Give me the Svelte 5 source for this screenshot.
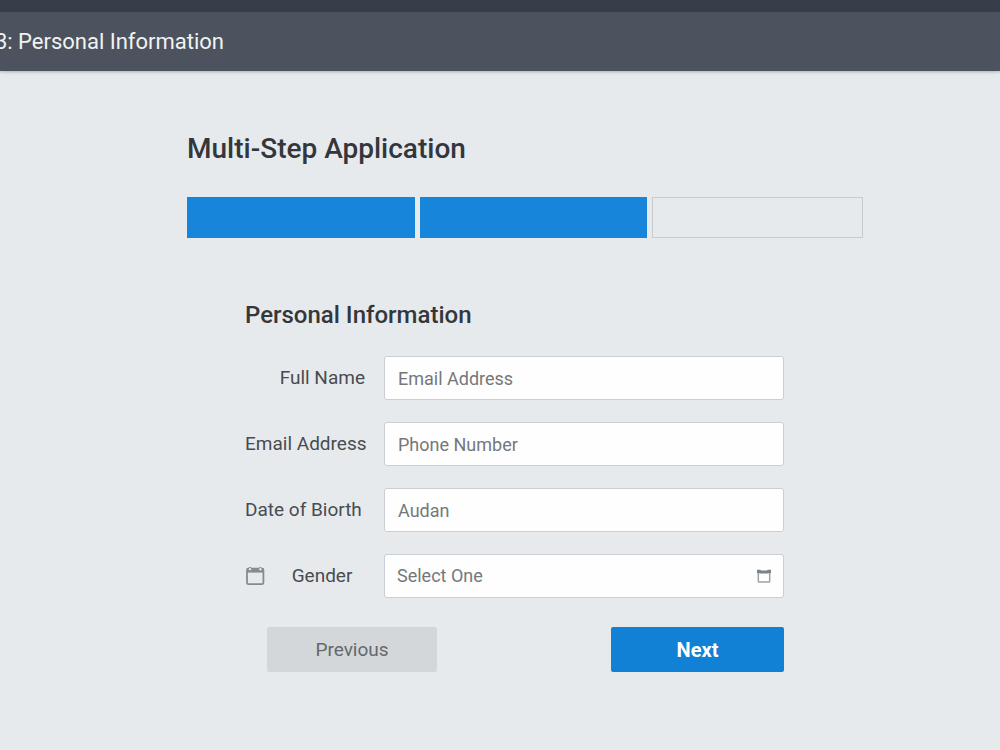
<script lang="ts">
  const steps = [true, true, false];
  const fields = [
    { id: 'full-name', label: 'Full Name', placeholder: 'Email Address', align: 'inset' },
    { id: 'email', label: 'Email Address', placeholder: 'Phone Number', align: 'start' },
    { id: 'birth', label: 'Date of Biorth', placeholder: 'Audan', align: 'start' },
  ];
</script>

<header>
  <div class="strip"></div>
  <div class="bar"><p class="crumb">3: Personal Information</p></div>
</header>

<main>
  <h1>Multi-Step Application</h1>
  <div class="steps">
    {#each steps as done}
      <div class="step" class:done></div>
    {/each}
  </div>

  <form onsubmit={(e) => e.preventDefault()}>
    <h2>Personal Information</h2>
    <div class="fields">
      {#each fields as f}
        <div class="row">
          <div class="caption {f.align}"><label for={f.id}>{f.label}</label></div>
          <input class="control" id={f.id} type="text" placeholder={f.placeholder} />
        </div>
      {/each}
      <div class="row">
        <div class="caption with-icon">
          <svg class="calendar" viewBox="0 0 20 20" aria-hidden="true">
            <rect x="2" y="2.6" width="16.4" height="15.6" rx="1.5" fill="none" stroke="#858b91" stroke-width="1.8" />
            <path d="M2 2h16.4v4.6H2z" fill="#858b91" />
            <circle cx="5" cy="3.2" r="1.7" fill="#e7eaed" stroke="#858b91" />
            <circle cx="15.4" cy="3.2" r="1.7" fill="#e7eaed" stroke="#858b91" />
          </svg>
          <label for="gender">Gender</label>
        </div>
        <div class="select">
          <select class="control" id="gender"><option>Select One</option></select>
          <svg class="mini" viewBox="0 0 16 14" aria-hidden="true">
            <path d="M2.3 3v9.2q0 .8.8.8h9.8q.8 0 .8-.8V3" fill="none" stroke="#9ba3a9" stroke-width="1.5" />
            <path d="M1 .8h3.2l1 .6h5.6l1-.6H15v3.2h-1.6l-1.5.6H4.1L2.6 4H1z" fill="#7b8289" />
          </svg>
        </div>
      </div>
    </div>
    <div class="actions">
      <button type="button" class="previous">Previous</button>
      <button type="submit" class="next">Next</button>
    </div>
  </form>
</main>

<style>
  :global(body) {
    margin: 0;
    min-height: 100vh;
    background: #e7eaed;
    font-family: Roboto, 'Liberation Sans', sans-serif;
    color: #33373b;
  }
  .strip {
    height: 12px;
    background: #383e48;
  }
  .bar {
    display: flex;
    align-items: center;
    height: 59px;
    background: #4c535e;
    box-shadow: 0 1px 3px rgba(60, 66, 76, 0.35);
  }
  .crumb {
    display: flex;
    justify-content: flex-end;
    width: 224px;
    margin: 0;
    overflow: hidden;
    white-space: nowrap;
    font-size: 22px;
    line-height: 32px;
    color: #f2f2f2;
  }
  main {
    padding: 58px 137px 40px 187px;
  }
  h1 {
    margin: 0;
    font-size: 28px;
    font-weight: 500;
    line-height: 40px;
  }
  .steps {
    display: grid;
    grid-template-columns: 228fr 227fr 211fr;
    gap: 5px;
    margin-top: 28px;
  }
  .step {
    box-sizing: border-box;
    height: 41px;
    border: 1px solid #c8ccd0;
  }
  .done {
    background: #1786da;
    border-color: #1786da;
  }
  form {
    margin: 61px 79px 0 58px;
  }
  h2 {
    margin: 0;
    font-size: 24px;
    font-weight: 500;
    line-height: 32px;
  }
  .fields {
    display: grid;
    gap: 22px;
    margin-top: 25px;
  }
  .row {
    display: grid;
    grid-template-columns: 120px minmax(0, 1fr);
    column-gap: 19px;
    align-items: center;
  }
  .caption {
    display: flex;
    align-items: center;
    white-space: nowrap;
    font-size: 19px;
    line-height: 24px;
    color: #484c50;
  }
  .inset {
    justify-content: flex-end;
  }
  .with-icon {
    gap: 14px;
  }
  .with-icon label {
    flex: 1;
    text-align: center;
  }
  .calendar {
    width: 20px;
    height: 20px;
  }
  .control {
    box-sizing: border-box;
    display: block;
    width: 100%;
    height: 44px;
    padding: 0 13px;
    border: 1px solid #c9cfd5;
    border-radius: 3px;
    background: #fefefe;
    font: 18px/24px Roboto, 'Liberation Sans', sans-serif;
    color: #75787b;
    appearance: none;
  }
  .control::placeholder {
    color: #75787b;
    opacity: 1;
  }
  .select {
    position: relative;
  }
  .select .control {
    padding: 0 12px;
  }
  .mini {
    position: absolute;
    right: 12px;
    top: 15px;
    width: 16px;
    height: 14px;
    pointer-events: none;
  }
  .actions {
    display: flex;
    justify-content: space-between;
    margin-top: 29px;
    padding-left: 22px;
  }
  button {
    height: 45px;
    border: 0;
    border-radius: 2px;
    font: 19px/24px Roboto, 'Liberation Sans', sans-serif;
  }
  .previous {
    width: 170px;
    background: #d3d7da;
    color: #63686c;
  }
  .next {
    width: 173px;
    background: #1081d4;
    color: #fff;
    font-size: 20px;
    font-weight: 700;
  }
</style>
